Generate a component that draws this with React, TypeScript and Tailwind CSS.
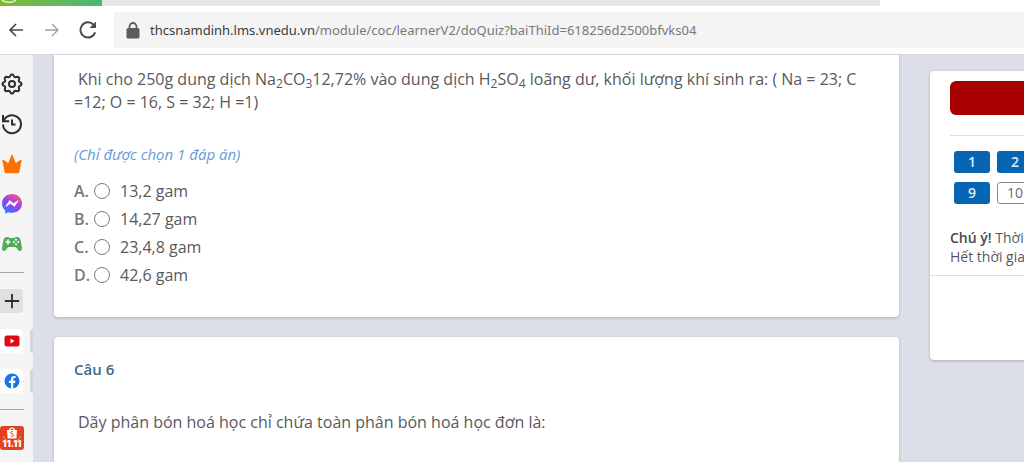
import React, { useState } from 'react';
import { Plus } from 'lucide-react';

const options = [
    { letter: 'A', text: '13,2 gam' },
    { letter: 'B', text: '14,27 gam' },
    { letter: 'C', text: '23,4,8 gam' },
    { letter: 'D', text: '42,6 gam' },
];

const questions = [
    { number: 1, done: true },
    { number: 2, done: true },
    { number: 9, done: true },
    { number: 10, done: false },
];

// Outline of the settings gear: eight rounded teeth round the centre (11, 11)
const gearPath = () => {
    const points = [];
    for (let i = 0; i < 96; i++) {
        const angle = (i / 96) * Math.PI * 2;
        const wave = Math.cos(8 * angle);
        const radius = 8.5 + Math.sign(wave) * Math.pow(Math.abs(wave), 0.6);
        points.push(`${(11 + radius * Math.sin(angle)).toFixed(2)} ${(11 - radius * Math.cos(angle)).toFixed(2)}`);
    }
    return `M${points.join('L')}z`;
};

function GearIcon() {
    return (
        <svg width="22" height="22" viewBox="0 0 22 22" fill="none" stroke="currentColor" strokeWidth="2" strokeLinejoin="round">
            <path d={gearPath()} />
            <circle cx="11" cy="11" r="3" />
        </svg>
    );
}

function HistoryIcon() {
    return (
        <svg width="22" height="22" viewBox="0 0 22 22" fill="none" stroke="currentColor" strokeWidth="2">
            <path d="M2.500 8.200A9 9 0 1 1 2 11.500" />
            <path d="M2 2v6.200h6.200" />
            <path d="M11 6.500v5h3.500" />
        </svg>
    );
}

function BackIcon() {
    return (
        <svg width="16" height="16" viewBox="0 0 16 16" fill="none" stroke="currentColor" strokeWidth="1.7">
            <path d="M15 8H2M8 2 2 8l6 6" />
        </svg>
    );
}

function ForwardIcon() {
    return (
        <svg width="16" height="16" viewBox="0 0 16 16" fill="none" stroke="currentColor" strokeWidth="1.4">
            <path d="M1 8h13M8 2l6 6-6 6" />
        </svg>
    );
}

function ReloadIcon() {
    return (
        <svg width="20" height="20" viewBox="0 0 20 20" fill="none" stroke="currentColor" strokeWidth="2">
            <path d="M17.2 12.4A7.6 7.6 0 1 1 15.6 4.8" />
            <path d="M18 1.5V8h-6.500z" fill="currentColor" stroke="none" />
        </svg>
    );
}

function LockIcon() {
    return (
        <svg width="14" height="17" viewBox="0 0 14 17">
            <path d="M3.500 7V4.500a3.500 3.500 0 0 1 7 0V7" fill="none" stroke="#5a5c60" strokeWidth="1.8" />
            <rect x="0.500" y="6" width="13" height="10.500" rx="1.500" fill="#5a5c60" />
        </svg>
    );
}

function CrownIcon() {
    return (
        <svg width="22" height="22" viewBox="0 0 22 22">
            <path
                d="M1.200 6.500c2.600 1 4.600 2.200 6 3.700L11 1l3.800 9.200c1.400-1.500 3.400-2.700 6-3.700l-2.400 12.300c-.2 1-.8 1.500-1.700 1.500H5.300c-.9 0-1.500-.5-1.700-1.500z"
                fill="#fa7100"
            />
        </svg>
    );
}

function MessengerIcon() {
    return (
        <svg width="22" height="22" viewBox="0 0 22 22">
            <defs>
                <linearGradient id="messenger" x1="0.200" y1="1" x2="0.800" y2="0">
                    <stop offset="0" stopColor="#1c83ff" />
                    <stop offset="0.500" stopColor="#9a3df2" />
                    <stop offset="1" stopColor="#fb5c75" />
                </linearGradient>
            </defs>
            <path
                d="M11 1C5.200 1 1 5.200 1 10.500c0 2.900 1.200 5.300 3.200 7v3.300l3-1.600c1.200.4 2.500.6 3.800.6 5.800 0 10-4.100 10-9.300S16.800 1 11 1z"
                fill="url(#messenger)"
            />
            <path d="m5 13.300 3.600-5.600 4 3 4.400-2.900-3.600 5.500-3.900-3z" fill="#fff" stroke="#fff" strokeLinejoin="round" />
        </svg>
    );
}

function GamepadIcon() {
    return (
        <svg width="22" height="16" viewBox="0 0 22 16">
            <path
                d="M6.500 1C3.300 1 2.600 3 2 6l-.9 5.500C.7 14 1.600 15 3 15c2.300 0 3-4 5-4h6c2 0 2.700 4 5 4 1.400 0 2.300-1 1.900-3.500L20 6c-.6-3-1.300-5-4.500-5-1.500 0-1.800 1-2.500 1H9c-.7 0-1-1-2.500-1z"
                fill="#52ad58"
            />
            <path d="M7 3.500v5M4.500 6h5" stroke="#fff" strokeWidth="1.500" />
            <g fill="#fff">
                <circle cx="15" cy="3.800" r="1" />
                <circle cx="15" cy="8.200" r="1" />
                <circle cx="12.900" cy="6" r="1" />
                <circle cx="17.200" cy="6" r="1" />
            </g>
        </svg>
    );
}

function YoutubeIcon() {
    return (
        <svg width="16" height="12" viewBox="0 0 16 12">
            <rect x="0.500" y="0.500" width="15" height="11" rx="2.500" fill="#e30613" />
            <path d="m6.500 3.600 4 2.400-4 2.400z" fill="#fff" />
        </svg>
    );
}

function FacebookIcon() {
    return (
        <svg width="16" height="16" viewBox="0 0 16 16">
            <circle cx="8" cy="8" r="7.500" fill="#1b74e4" />
            <path
                d="M7 15.500V10H5V7.700h2V6c0-2 1.200-3.100 3-3.100.9 0 1.600.1 1.600.1v2h-1c-1 0-1.300.6-1.300 1.300v1.400h2.200L11.100 10H9.300v5.500z"
                fill="#fff"
            />
        </svg>
    );
}

function ShopeeIcon() {
    return (
        <svg width="24" height="24" viewBox="0 0 24 24" className="shrink-0">
            <rect width="24" height="24" rx="3" fill="#e2401f" />
            <path d="M9.500 4.500a2.500 2.500 0 0 1 5 0" fill="none" stroke="#fff" strokeWidth="1.200" />
            <path d="M7 4h10l-.6 8.500H7.600z" fill="#fff" />
            <path d="M13.400 6c-1-.8-2.800-.5-2.800.7 0 1.400 2.900 1 2.900 2.500 0 1.300-2 1.500-3 .6" fill="none" stroke="#e2401f" strokeWidth="1" />
            <path d="M3 11h2M19 11h2M5 13l1 1M19 13l-1 1" stroke="#ffb04a" strokeWidth="1.200" />
            <text x="12" y="21" textAnchor="middle" fontSize="9" fontWeight="900" fill="#fff" fontFamily="Inter, sans-serif">
                11.11
            </text>
        </svg>
    );
}

function SideButton({ label, children }: { label: string; children: React.ReactNode }) {
    return (
        <button aria-label={label} className="flex h-10 w-full shrink-0 items-center justify-center">
            {children}
        </button>
    );
}

function Sidebar() {
    return (
        <nav className="w-[33px] shrink-0 bg-[#f5f5f5] pt-[9px] text-[#2c2d30]">
            <div className="w-[23px]">
                <SideButton label="Settings"><GearIcon /></SideButton>
                <SideButton label="History"><HistoryIcon /></SideButton>
                <SideButton label="Rewards"><CrownIcon /></SideButton>
                <SideButton label="Messenger"><MessengerIcon /></SideButton>
                <SideButton label="Games"><GamepadIcon /></SideButton>
            </div>
            <hr className="my-2 w-6 border-[#a9a9a9]" />
            <div className="w-[23px]">
                <SideButton label="Add">
                    <span className="flex h-6 w-full items-center justify-center rounded-r bg-[#e0e0e0]">
                        <Plus size={22} strokeWidth={2} className="shrink-0" />
                    </span>
                </SideButton>
            </div>
            <div className="flex items-center justify-between">
                <div className="w-[23px]">
                    <SideButton label="YouTube">
                        <span className="flex h-6 w-full items-center justify-center rounded-r bg-white"><YoutubeIcon /></span>
                    </SideButton>
                </div>
                <span className="h-6 w-[3px] rounded-l bg-[#d4d5d8]" />
            </div>
            <div className="flex items-center justify-between">
                <div className="w-[23px]">
                    <SideButton label="Facebook">
                        <span className="flex h-6 w-full items-center justify-center rounded-r bg-white"><FacebookIcon /></span>
                    </SideButton>
                </div>
                <span className="h-6 w-[3px] rounded-l bg-[#d4d5d8]" />
            </div>
            <hr className="my-2 w-6 border-[#a9a9a9]" />
            <div className="w-6">
                <SideButton label="Shopee"><ShopeeIcon /></SideButton>
            </div>
        </nav>
    );
}

export default function App() {
    const [path, setPath] = useState('/module/coc/learnerV2/doQuiz?baiThiId=618256d2500bfvks04');
    const [answer, setAnswer] = useState('');

    return (
        <div className="flex h-screen flex-col overflow-hidden bg-[#dcdee8] font-['Open_Sans','Noto_Sans',sans-serif] text-[#58595b]">
            <header className="shrink-0 border-b border-[#d9dade] bg-white">
                <div className="flex h-[6px]">
                    <div className="w-[102px] bg-linear-to-r from-[#80b92d] to-[#48b871]">
                        <svg width="20" height="4" viewBox="0 0 20 4" fill="none" stroke="#e5f3dc" strokeWidth="1.500">
                            <path d="M2 0c3 3 11 3 14 0" />
                        </svg>
                    </div>
                    <div className="flex-1 bg-[#e3e7ea]" />
                    <div className="w-[144px] bg-white" />
                </div>
                <div className="flex items-center py-[6px]">
                    <button aria-label="Back" className="ml-2 text-[#4a4b4e]"><BackIcon /></button>
                    <button aria-label="Forward" className="ml-5 text-[#a2a3a6]"><ForwardIcon /></button>
                    <button aria-label="Reload" className="ml-[18px] text-[#4a4b4e]"><ReloadIcon /></button>
                    <div className="ml-4 flex h-9 flex-1 items-center bg-[#f4f4f4] pl-3 font-['Noto_Sans',sans-serif] text-[13px] leading-5">
                        <LockIcon />
                        <label htmlFor="address" className="ml-[10px] text-[#3b3c3f]">thcsnamdinh.lms.vnedu.vn</label>
                        <input
                            id="address"
                            value={path}
                            onChange={(e) => setPath(e.target.value)}
                            className="min-w-0 flex-1 bg-transparent text-[#77787b] outline-none"
                        />
                    </div>
                </div>
            </header>

            <div className="flex min-h-0 flex-1">
                <Sidebar />

                <main className="ml-[21px] flex min-w-0 flex-1 flex-col gap-5">
                    <section className="rounded-b bg-white px-5 pt-[13px] pb-7 shadow-[0_1px_3px_rgba(80,85,110,0.35)]">
                        <p className="text-base leading-[23px]">
                            <span className="ml-1">Khi cho 250g dung dịch Na</span><sub>2</sub>CO<sub>3</sub>12,72% vào dung dịch H<sub>2</sub>SO<sub>4</sub> loãng
                            dư, khối lượng khí sinh ra: ( Na = 23; C =12; O = 16, S = 32; H =1)
                        </p>
                        <p className="mt-[30px] text-[15px] leading-5 text-[#669bd6] italic">(Chỉ được chọn 1 đáp án)</p>
                        <div className="mt-[13px]">
                            {options.map((o) => (
                                <label key={o.letter} className="flex h-7 items-center text-base">
                                    <span className="w-5 font-semibold text-[#77787a]">{o.letter}.</span>
                                    <input
                                        type="radio"
                                        name="answer"
                                        value={o.letter}
                                        checked={answer === o.letter}
                                        onChange={() => setAnswer(o.letter)}
                                        className="size-4 appearance-none rounded-full border border-[#7c7c7c] bg-white checked:border-4 checked:border-[#0565b3]"
                                    />
                                    <span className="ml-[10px]">{o.text}</span>
                                </label>
                            ))}
                        </div>
                    </section>

                    <section className="flex-1 rounded-t bg-white px-5 pt-5 shadow-[0_1px_3px_rgba(80,85,110,0.35)]">
                        <h2 className="text-[15px] leading-6 font-semibold text-[#3f6687]">Câu 6</h2>
                        <p className="mt-[30px] ml-1 text-base leading-[23px]">Dãy phân bón hoá học chỉ chứa toàn phân bón hoá học đơn là:</p>
                    </section>
                </main>

                <aside className="mt-4 ml-[31px] h-[289px] w-[94px] shrink-0 rounded-l bg-white pt-[10px] text-sm shadow-[0_1px_3px_rgba(80,85,110,0.35)]">
                    <div className="pl-5">
                        <button aria-label="Nộp bài" className="block h-[34px] w-full rounded-l-md bg-[#a80000]" />
                        <hr className="mt-5 border-[#dedfe2]" />
                        <div className="mt-[15px] ml-1 grid grid-cols-[36px_36px] gap-x-[7px] gap-y-[9px]">
                            {questions.map((q) => (
                                <button
                                    key={q.number}
                                    className={
                                        q.done
                                            ? 'h-[22px] rounded-[3px] bg-[#0565b3] leading-5 font-semibold text-[#dcecfa]'
                                            : 'h-[22px] rounded-[3px] border border-[#88898c] bg-white leading-5 text-[#6b6c6e]'
                                    }
                                >
                                    {q.number}
                                </button>
                            ))}
                        </div>
                        <p className="mt-6 leading-[19px] whitespace-nowrap">
                            <b className="font-semibold text-[#48494b]">Chú ý!</b> Thời
                            <br />
                            Hết thời gia
                        </p>
                    </div>
                    <hr className="mt-[9px] border-[#dedfe2]" />
                </aside>
            </div>
        </div>
    );
}
